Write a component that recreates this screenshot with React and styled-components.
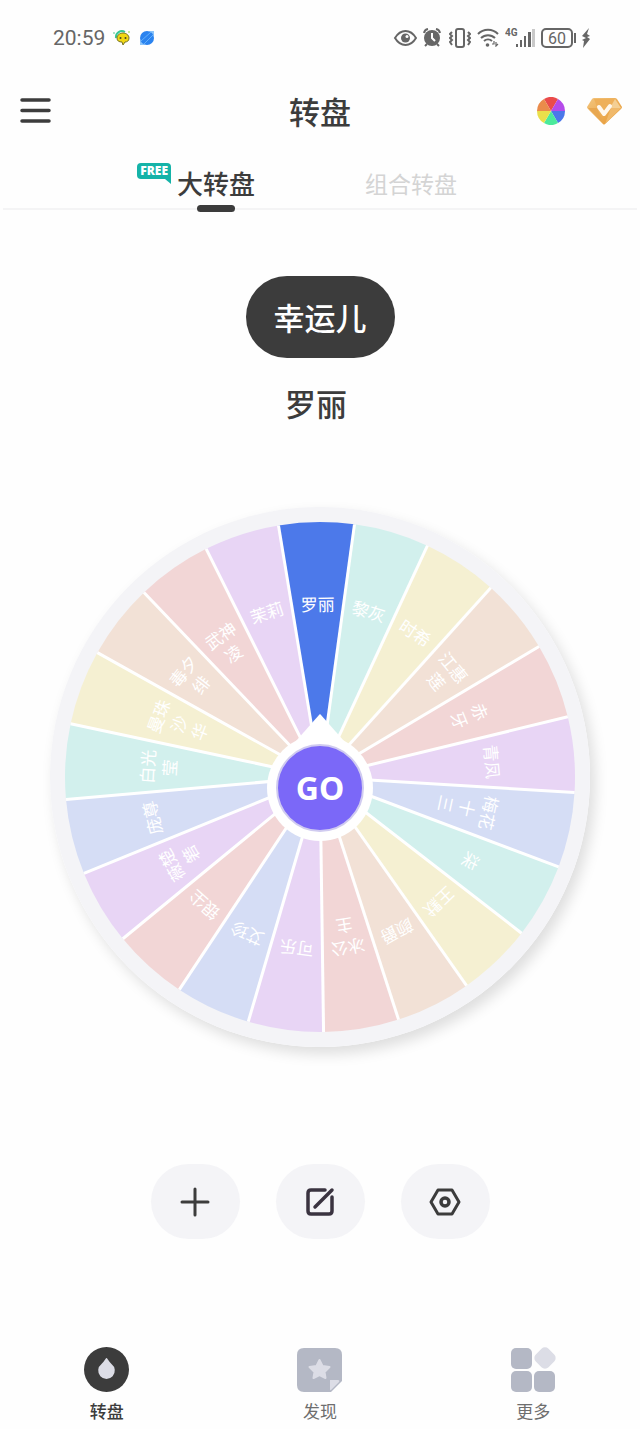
import React, { useState } from 'react';
import styled, { createGlobalStyle, css } from 'styled-components';

const GlobalStyle = createGlobalStyle`
    * {
        box-sizing: border-box;
    }

    body {
        margin: 0;
        background: #fefefe;
        color: #3c3c3c;
        font-family: 'Noto Sans CJK SC', sans-serif;
    }

    button {
        padding: 0;
        border: 0;
        background: none;
        color: inherit;
        font-family: inherit;
        cursor: pointer;
    }

    svg {
        display: block;
    }
`;

const StyledPage = styled.div`
    display: flex;
    flex-direction: column;
    min-height: 100vh;
`;

const StyledStatusBar = styled.div`
    display: flex;
    align-items: center;
    justify-content: space-between;
    height: 75px;
    padding: 0 50px 0 53px;
    color: #666;
`;

const StyledStatusGroup = styled.div`
    display: flex;
    align-items: center;
    gap: ${({ $gap }) => $gap}px;
`;

const StyledClock = styled.span`
    font-family: Roboto, sans-serif;
    font-size: 21px;
    line-height: 24px;
`;

const StyledHeader = styled.header`
    display: grid;
    grid-template-columns: 1fr auto 1fr;
    align-items: center;
    height: 72px;
    padding: 0 18px;
`;

const StyledTitle = styled.h1`
    margin: 0;
    font-size: 31px;
    font-weight: 500;
    line-height: 46px;
`;

const StyledHeaderActions = styled.div`
    display: flex;
    align-items: center;
    justify-content: flex-end;
    gap: 22px;
`;

const StyledIconButton = styled.button`
    justify-self: start;
`;

const StyledTabs = styled.div`
    display: flex;
    justify-content: center;
    gap: 110px;
    height: 63px;
    margin: 0 3px;
    padding: 11px 6px 0 0;
    border-bottom: 2px solid #f4f4f5;
`;

const StyledTab = styled.button`
    position: relative;
    color: #d4d4d4;
    font-size: 23px;
    font-weight: 400;
    line-height: 48px;

    ${({ $active }) => $active && css`
        color: #3c3c3c;
        font-size: 26px;
        font-weight: 500;

        &::after {
            content: '';
            position: absolute;
            left: 50%;
            bottom: -4px;
            width: 38px;
            height: 7px;
            border-radius: 4px;
            background: #3c3c3c;
            transform: translateX(-50%);
        }
    `}
`;

const StyledFreeBadge = styled.span`
    position: absolute;
    right: 100%;
    top: 5px;
    margin-right: 6px;
    padding: 0 3px;
    border-radius: 4px 4px 0 4px;
    background: #15b3a8;
    color: #fff;
    font-family: 'Open Sans', sans-serif;
    font-size: 12px;
    font-weight: 800;
    line-height: 16px;

    &::after {
        content: '';
        position: absolute;
        right: 0;
        top: 100%;
        border-top: 5px solid #15b3a8;
        border-left: 6px solid transparent;
    }
`;

const StyledMain = styled.main`
    display: flex;
    flex-direction: column;
    align-items: center;
    padding: 66px 50px 0;
`;

const StyledLuckyPill = styled.div`
    padding: 0 28px;
    border-radius: 41px;
    background: #3c3c3c;
    color: #fff;
    font-size: 31px;
    font-weight: 500;
    line-height: 82px;
`;

const StyledWinner = styled.div`
    margin-top: 22px;
    padding-right: 8px;
    font-size: 31px;
    font-weight: 500;
    line-height: 46px;
`;

const StyledWheel = styled.div`
    position: relative;
    width: 100%;
    max-width: 540px;
    margin-top: 81px;
`;

const StyledWheelSvg = styled.svg`
    width: 100%;
    overflow: visible;
    border-radius: 50%;
    box-shadow: 5px 7px 14px rgba(0, 0, 0, 0.13);
`;

const StyledWheelLabel = styled.text`
    fill: #fff;
    font-size: 17px;
    text-anchor: middle;
`;

const StyledGoButton = styled.button`
    position: absolute;
    left: 50%;
    top: 52%;
    width: 88px;
    height: 88px;
    border: 2px solid #d0cbf0;
    border-radius: 50%;
    background: #7b68f8;
    color: #fff;
    font-family: 'Noto Sans', sans-serif;
    font-size: 32px;
    font-weight: 700;
    line-height: 84px;
    transform: translate(-50%, -50%);
`;

const StyledActions = styled.div`
    display: flex;
    justify-content: center;
    gap: 36px;
    margin-top: 117px;
`;

const StyledActionButton = styled.button`
    display: flex;
    align-items: center;
    justify-content: center;
    width: 89px;
    height: 75px;
    border-radius: 38px;
    background: #f4f4f7;
`;

const StyledNav = styled.nav`
    display: grid;
    grid-template-columns: repeat(3, 1fr);
    margin-top: auto;
    padding: 20px 0 6px;
`;

const StyledNavItem = styled.button`
    display: flex;
    flex-direction: column;
    align-items: center;
    gap: 7px;
    color: ${({ $active }) => ($active ? '#3c3c3c' : '#6e6e6e')};
    font-size: 17px;
    font-weight: ${({ $active }) => ($active ? 500 : 400)};
    line-height: 24px;
`;

const COLORS = {
    picked: '#4c79ea',
    teal: '#d2f0ed',
    yellow: '#f5f0d2',
    orange: '#f2e1d6',
    red: '#f2d6d6',
    purple: '#e8d5f5',
    blue: '#d5ddf5'
};

// Each label is a list of lines, from the rim towards the hub
const SLICES = [
    { color: 'picked', lines: ['罗丽'] },
    { color: 'teal', lines: ['黎灰'] },
    { color: 'yellow', lines: ['时希'] },
    { color: 'orange', lines: ['江惠', '莲'] },
    { color: 'red', lines: ['赤', '牙'] },
    { color: 'purple', lines: ['青凤'] },
    { color: 'blue', lines: ['梅花', '十', '三'] },
    { color: 'teal', lines: ['柒'] },
    { color: 'yellow', lines: ['王默'] },
    { color: 'orange', lines: ['颜爵'] },
    { color: 'red', lines: ['冰公', '主'] },
    { color: 'purple', lines: ['可乐'] },
    { color: 'blue', lines: ['艾珍'] },
    { color: 'red', lines: ['银尘'] },
    { color: 'purple', lines: ['薇楚', '箬'] },
    { color: 'blue', lines: ['庞尊'] },
    { color: 'teal', lines: ['白光', '莹'] },
    { color: 'yellow', lines: ['曼珠', '沙', '华'] },
    { color: 'orange', lines: ['毒夕', '绯'] },
    { color: 'red', lines: ['武神', '凌'] },
    { color: 'purple', lines: ['茉莉'] }
];

const CENTER = 270;
const RADIUS = 255;
const STEP = 360 / SLICES.length;
const START = -0.8;

const pointAt = (angle, radius, center = CENTER) => {
    const rad = (angle * Math.PI) / 180;
    return `${(center + radius * Math.sin(rad)).toFixed(2)} ${(center - radius * Math.cos(rad)).toFixed(2)}`;
};

const slicePath = (from, to, radius, center) =>
    `M${center} ${center}L${pointAt(from, radius, center)}A${radius} ${radius} 0 0 1 ${pointAt(to, radius, center)}Z`;

const Wheel = () => (
    <StyledWheel>
        <StyledWheelSvg viewBox="0 0 540 540">
            <circle cx={CENTER} cy={CENTER} r="270" fill="#f4f4f7" />
            {SLICES.map(({ color, lines }, index) => {
                const angle = START + index * STEP;
                return (
                    <path
                        key={lines.join('')}
                        d={slicePath(angle - STEP / 2, angle + STEP / 2, RADIUS, CENTER)}
                        fill={COLORS[color]}
                    />
                );
            })}
            {SLICES.map(({ lines }, index) => (
                <path
                    key={lines.join('')}
                    d={`M${CENTER} ${CENTER}L${pointAt(START + (index + 0.5) * STEP, RADIUS)}`}
                    stroke="#fff"
                    strokeWidth="3"
                />
            ))}
            {SLICES.map(({ lines }, index) => (
                <g key={lines.join('')} transform={`rotate(${START + index * STEP} ${CENTER} ${CENTER})`}>
                    {lines.map((line, row) => (
                        <StyledWheelLabel key={line} x={CENTER} y={CENTER - 166 + row * 22}>
                            {line}
                        </StyledWheelLabel>
                    ))}
                </g>
            ))}
            <circle cx="270" cy="281" r="53" fill="#fff" />
            <path d="M269 208L270 207L271 208L294 234L270 260L246 234Z" fill="#fff" />
        </StyledWheelSvg>
        <StyledGoButton type="button">GO</StyledGoButton>
    </StyledWheel>
);

const ChatAppIcon = () => (
    <svg width="18" height="18" viewBox="0 0 18 18">
        <path d="M3 9a6 6 0 0 1 9-6" fill="none" stroke="#39c795" strokeWidth="2" />
        <circle cx="1" cy="4" r="1" fill="#8ed9b4" />
        <circle cx="16" cy="3" r="1" fill="#b6e37a" />
        <path d="M10 4c3 0 6 2 6 5s-2 4-4 4l-2 3-1-3c-3 0-5-1-5-4s3-5 6-5z" fill="#f0d713" stroke="#777425" />
        <circle cx="7.500" cy="9" r="1" fill="#484426" />
        <circle cx="12.500" cy="9" r="1" fill="#484426" />
    </svg>
);

const PlanetAppIcon = () => (
    <svg width="16" height="16" viewBox="0 0 16 16">
        <path d="M10 1h5v5zM1 10v5h5z" fill="#8cc5fa" />
        <circle cx="8" cy="8" r="7" fill="#2b83ef" />
        <path d="M2 11 12 2M5 14l9-9" stroke="#63b0fa" />
    </svg>
);

const EyeIcon = () => (
    <svg width="24" height="18" viewBox="0 0 24 18" fill="none" stroke="currentColor" strokeWidth="2">
        <path d="M2 9c3-5 6-7 10.500-7S20 4 23 9c-3 5-6 7-10.500 7S5 14 2 9z" />
        <circle cx="12.500" cy="9" r="4.500" fill="currentColor" stroke="none" />
        <circle cx="14" cy="7.500" r="1.500" fill="#fefefe" stroke="none" />
    </svg>
);

const AlarmIcon = () => (
    <svg width="20" height="19" viewBox="0 0 20 19" fill="none" stroke="currentColor" strokeWidth="2">
        <circle cx="9" cy="10" r="8" fill="currentColor" stroke="none" />
        <path d="M1 5a5 5 0 0 1 4-4M17 5a5 5 0 0 0-4-4M4 16l-2 2M14 16l2 2" />
        <path d="M9 5v5l3 3" stroke="#fefefe" />
    </svg>
);

const VibrateIcon = () => (
    <svg width="22" height="20" viewBox="0 0 22 20" fill="none" stroke="currentColor" strokeWidth="2">
        <rect x="7" y="1" width="8" height="18" rx="2" />
        <path d="M3 4 1 6l2 2-2 2 2 2-2 2 2 3M19 4l2 2-2 2 2 2-2 2 2 2-2 3" />
    </svg>
);

const WifiIcon = () => (
    <svg width="22" height="19" viewBox="0 0 22 19" fill="none" stroke="currentColor" strokeWidth="2">
        <path d="M1 6a14 14 0 0 1 20 0M4 10a10 10 0 0 1 14 0M7 13a6 6 0 0 1 8 0" />
        <circle cx="10.500" cy="17" r="1.800" fill="currentColor" stroke="none" />
        <path d="M15 16h2v-3M19 14v4l2-2" strokeWidth="1.200" />
    </svg>
);

const SignalIcon = () => (
    <svg width="30" height="20" viewBox="0 0 30 20" fill="currentColor">
        <text x="0" y="8" fontFamily="Roboto, sans-serif" fontSize="10" fontWeight="700">4G</text>
        <path d="M11 16h2v3h-2zM15 12h2v7h-2zM19 8h2v11h-2zM23 4h3v15h-3z" />
        <path d="M27 1h3v18h-3z" opacity="0.35" />
    </svg>
);

const BatteryIcon = () => (
    <svg width="35" height="20" viewBox="0 0 35 20" fill="none" stroke="currentColor">
        <rect x="1" y="1" width="30" height="18" rx="4" strokeWidth="2" />
        <path d="M34 5v10" strokeWidth="2" />
        <text x="16" y="16" textAnchor="middle" fontFamily="Roboto, sans-serif" fontSize="16" fill="currentColor" stroke="none">60</text>
    </svg>
);

const BoltIcon = () => (
    <svg width="8" height="20" viewBox="0 0 8 20" fill="currentColor">
        <path d="M7 0 0 8l4 2-4 2 2 1-1 7 7-9-3-2 3-1-3-2z" />
    </svg>
);

const MenuIcon = () => (
    <svg width="35" height="30" viewBox="0 0 35 30" stroke="#3c3c3c" strokeWidth="3.500" strokeLinecap="round">
        <path d="M4 4h27M4 14.500h27M4 25h27" />
    </svg>
);

const PALETTE = ['#ea4b4b', '#b54bea', '#4b78ea', '#4bea9c', '#eadf4b', '#ea8b4b'];

const ColorWheelIcon = () => (
    <svg width="28" height="28" viewBox="0 0 28 28">
        {PALETTE.map((color, index) => (
            <path key={color} d={slicePath(index * 60 - 30, index * 60 + 30, 14, 14)} fill={color} />
        ))}
    </svg>
);

const DiamondIcon = () => (
    <svg width="35" height="27" viewBox="0 0 35 27">
        <defs>
            <linearGradient id="gem" x1="0" y1="0" x2="1" y2="1">
                <stop offset="0" stopColor="#f3c57d" />
                <stop offset="1" stopColor="#e6962f" />
            </linearGradient>
        </defs>
        <path d="M7 0h21q1 0 2 1l5 8q0 1-1 2L18 26q-1 1-2 0L1 11q-1-1-1-2l5-8q1-1 2-1z" fill="url(#gem)" />
        <path d="M7 1h21l-5 8H10z" fill="#eeb05a" />
        <path d="M28 1l6 9H23z" fill="#f4cf94" />
        <path d="M1 10h9l7 16z" fill="#e8a750" />
        <path d="M34 10H24l-6 16z" fill="#f0b96b" />
        <path d="m12 9 5 7 6-8" fill="none" stroke="#fff8ee" strokeWidth="4" strokeLinecap="round" strokeLinejoin="round" />
    </svg>
);

const PlusIcon = () => (
    <svg width="30" height="30" viewBox="0 0 30 30" stroke="#3c3c3c" strokeWidth="3" strokeLinecap="round">
        <path d="M15 2v26M2 15h26" />
    </svg>
);

const EditIcon = () => (
    <svg width="30" height="30" viewBox="0 0 30 30" fill="none" stroke="#3a3340" strokeWidth="3.500" strokeLinecap="round">
        <path d="M20 3H6q-3 0-3 3v18q0 3 3 3h18q3 0 3-3V10M27 3 10 20" />
    </svg>
);

const SettingsIcon = () => (
    <svg width="32" height="30" viewBox="0 0 32 30" fill="none" stroke="#3c3c3c" strokeWidth="3" strokeLinejoin="round">
        <path d="M9 3h14l7 12-7 12H9L2 15z" />
        <circle cx="16" cy="15" r="4" strokeWidth="3.500" />
    </svg>
);

const WheelNavIcon = () => (
    <svg width="45" height="45" viewBox="0 0 45 45">
        <circle cx="22.500" cy="22.500" r="22.500" fill="#3c3c3c" />
        <path d="M21.500 12q1-2 2 0 2 3 4 5a8.300 8.300 0 1 1-10 0q2-2 4-5z" fill="#dcdde6" />
    </svg>
);

const DiscoverNavIcon = () => (
    <svg width="45" height="45" viewBox="0 0 45 45">
        <path d="M7 1h31q7 0 7 7v26L34 45H7q-7 0-7-7V8q0-7 7-7z" fill="#b4b8c5" />
        <path
            d="m22.500 13 3 6 7 1-5 5 1 6-6-3-6 3 1-6-5-5 7-1z"
            fill="#dcdde6"
            stroke="#dcdde6"
            strokeWidth="2"
            strokeLinejoin="round"
        />
        <path d="M33 33h8q2 0 1 2l-8 8q-1 1-1-1z" fill="#dcdde6" />
    </svg>
);

const MoreNavIcon = () => (
    <svg width="45" height="45" viewBox="0 0 45 45" fill="#b4b8c5">
        <rect x="0" y="1" width="21" height="21" rx="5" />
        <rect x="0" y="24" width="21" height="21" rx="5" />
        <rect x="23" y="24" width="21" height="21" rx="5" />
        <rect x="25" y="2" width="18" height="18" rx="5" fill="#dcdde6" transform="rotate(45 34 11)" />
    </svg>
);

const NAV_ITEMS = [
    { label: '转盘', Icon: WheelNavIcon },
    { label: '发现', Icon: DiscoverNavIcon },
    { label: '更多', Icon: MoreNavIcon }
];

const App = () => {
    const [tab, setTab] = useState('大转盘');
    const [page, setPage] = useState('转盘');

    return (
        <StyledPage>
            <GlobalStyle />
            <StyledStatusBar>
                <StyledStatusGroup $gap={8}>
                    <StyledClock>20:59</StyledClock>
                    <ChatAppIcon />
                    <PlanetAppIcon />
                </StyledStatusGroup>
                <StyledStatusGroup $gap={6}>
                    <EyeIcon />
                    <AlarmIcon />
                    <VibrateIcon />
                    <WifiIcon />
                    <SignalIcon />
                    <BatteryIcon />
                    <BoltIcon />
                </StyledStatusGroup>
            </StyledStatusBar>

            <StyledHeader>
                <StyledIconButton type="button" aria-label="菜单">
                    <MenuIcon />
                </StyledIconButton>
                <StyledTitle>转盘</StyledTitle>
                <StyledHeaderActions>
                    <StyledIconButton type="button" aria-label="配色">
                        <ColorWheelIcon />
                    </StyledIconButton>
                    <StyledIconButton type="button" aria-label="会员">
                        <DiamondIcon />
                    </StyledIconButton>
                </StyledHeaderActions>
            </StyledHeader>

            <StyledTabs>
                <StyledTab type="button" $active={tab === '大转盘'} onClick={() => setTab('大转盘')}>
                    <StyledFreeBadge>FREE</StyledFreeBadge>
                    大转盘
                </StyledTab>
                <StyledTab type="button" $active={tab === '组合转盘'} onClick={() => setTab('组合转盘')}>
                    组合转盘
                </StyledTab>
            </StyledTabs>

            <StyledMain>
                <StyledLuckyPill>幸运儿</StyledLuckyPill>
                <StyledWinner>罗丽</StyledWinner>
                <Wheel />
                <StyledActions>
                    <StyledActionButton type="button" aria-label="新建">
                        <PlusIcon />
                    </StyledActionButton>
                    <StyledActionButton type="button" aria-label="编辑">
                        <EditIcon />
                    </StyledActionButton>
                    <StyledActionButton type="button" aria-label="设置">
                        <SettingsIcon />
                    </StyledActionButton>
                </StyledActions>
            </StyledMain>

            <StyledNav>
                {NAV_ITEMS.map(({ label, Icon }) => (
                    <StyledNavItem key={label} type="button" $active={page === label} onClick={() => setPage(label)}>
                        <Icon />
                        {label}
                    </StyledNavItem>
                ))}
            </StyledNav>
        </StyledPage>
    );
};

export default App;
